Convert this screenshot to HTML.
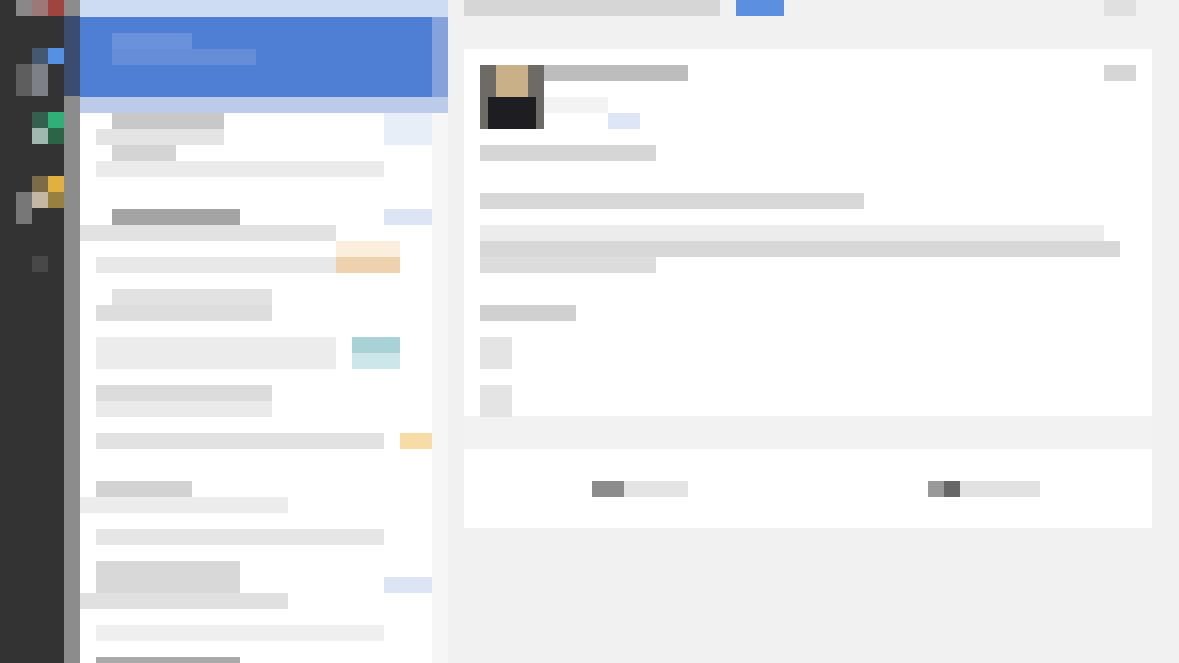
<!DOCTYPE html><html><head><meta charset="utf-8"><style>
body{margin:0;width:1179px;height:663px;overflow:hidden;background:#f1f1f1;position:relative;font-family:"Liberation Sans",sans-serif}
div{position:absolute}
.b{background:#ddd}
</style></head><body>
<div style="left:0;top:0;width:64px;height:663px;background:#333"></div>
<div style="left:64px;top:0;width:16px;height:663px;background:#8c8c8c"></div>
<div style="left:16px;top:0;width:16px;height:16px;background:#888"></div>
<div style="left:32px;top:0;width:16px;height:16px;background:#9c7878"></div>
<div style="left:48px;top:0;width:16px;height:16px;background:#a04440"></div>
<div style="left:48px;top:48px;width:16px;height:16px;background:#5590e5"></div>
<div style="left:32px;top:48px;width:16px;height:16px;background:#445870"></div>
<div style="left:16px;top:64px;width:16px;height:32px;background:#5e5e5e"></div>
<div style="left:32px;top:64px;width:16px;height:32px;background:#7e8088"></div>
<div style="left:64px;top:16px;width:16px;height:80px;background:#3c4c70"></div>
<div style="left:48px;top:112px;width:16px;height:16px;background:#30b078"></div>
<div style="left:32px;top:112px;width:16px;height:16px;background:#356050"></div>
<div style="left:32px;top:128px;width:16px;height:16px;background:#a0b8b0"></div>
<div style="left:48px;top:128px;width:16px;height:16px;background:#2c6448"></div>
<div style="left:48px;top:176px;width:16px;height:16px;background:#e0b040"></div>
<div style="left:32px;top:176px;width:16px;height:16px;background:#7c6a48"></div>
<div style="left:32px;top:192px;width:16px;height:16px;background:#c4b8a4"></div>
<div style="left:48px;top:192px;width:16px;height:16px;background:#988040"></div>
<div style="left:16px;top:192px;width:16px;height:32px;background:#777"></div>
<div style="left:32px;top:256px;width:16px;height:16px;background:#484848"></div>
<div style="left:80px;top:0;width:368px;height:663px;background:#fff"></div>
<div style="left:432px;top:0;width:16px;height:663px;background:#f6f6f6"></div>
<div style="left:80px;top:0;width:368px;height:17px;background:#cddbf3"></div>
<div style="left:80px;top:17px;width:352px;height:80px;background:#4f7fd4"></div>
<div style="left:432px;top:17px;width:16px;height:80px;background:#86a2dc"></div>
<div style="left:112px;top:33px;width:80px;height:16px;background:#6a92dc"></div>
<div style="left:112px;top:49px;width:144px;height:16px;background:#668ed8"></div>
<div style="left:80px;top:97px;width:368px;height:16px;background:#bdcbea"></div>
<!-- list rows -->
<div class="b" style="left:112px;top:113px;width:112px;height:16px;background:#c8c8c8"></div>
<div class="b" style="left:96px;top:129px;width:128px;height:16px;background:#e4e4e4"></div>
<div class="b" style="left:112px;top:145px;width:64px;height:16px;background:#d4d4d4"></div>
<div class="b" style="left:96px;top:161px;width:288px;height:16px;background:#ebebeb"></div>
<div style="left:384px;top:113px;width:48px;height:32px;background:#e8eef8"></div>
<div style="left:112px;top:209px;width:128px;height:16px;background:#a4a4a4"></div>
<div style="left:384px;top:209px;width:48px;height:16px;background:#dde5f5"></div>
<div class="b" style="left:80px;top:225px;width:256px;height:16px;background:#e2e2e2"></div>
<div class="b" style="left:96px;top:257px;width:240px;height:16px;background:#e8e8e8"></div>
<div style="left:336px;top:241px;width:64px;height:16px;background:#fbeedd"></div>
<div style="left:336px;top:257px;width:64px;height:16px;background:#eed2b0"></div>
<div class="b" style="left:112px;top:289px;width:160px;height:16px;background:#e2e2e2"></div>
<div class="b" style="left:96px;top:305px;width:176px;height:16px;background:#ddd"></div>
<div class="b" style="left:96px;top:337px;width:240px;height:32px;background:#ececec"></div>
<div style="left:352px;top:337px;width:48px;height:16px;background:#a8d2d6"></div>
<div style="left:352px;top:353px;width:48px;height:16px;background:#cde6ea"></div>
<div class="b" style="left:96px;top:385px;width:176px;height:16px;background:#dcdcdc"></div>
<div class="b" style="left:96px;top:401px;width:176px;height:16px;background:#eaeaea"></div>
<div class="b" style="left:96px;top:433px;width:288px;height:16px;background:#e2e2e2"></div>
<div style="left:400px;top:433px;width:32px;height:16px;background:#f8dca8"></div>
<div class="b" style="left:96px;top:481px;width:96px;height:16px;background:#d2d2d2"></div>
<div class="b" style="left:80px;top:497px;width:208px;height:16px;background:#ececec"></div>
<div class="b" style="left:96px;top:529px;width:288px;height:16px;background:#e6e6e6"></div>
<div class="b" style="left:96px;top:561px;width:144px;height:32px;background:#d8d8d8"></div>
<div style="left:384px;top:577px;width:48px;height:16px;background:#dde5f5"></div>
<div class="b" style="left:80px;top:593px;width:208px;height:16px;background:#e0e0e0"></div>
<div class="b" style="left:96px;top:625px;width:288px;height:16px;background:#efefef"></div>
<div class="b" style="left:96px;top:657px;width:144px;height:6px;background:#aaa"></div>
<!-- right -->
<div style="left:464px;top:0;width:256px;height:16px;background:#d6d6d6"></div>
<div style="left:736px;top:0;width:48px;height:16px;background:#5c8fe0"></div>
<div style="left:1104px;top:0;width:32px;height:16px;background:#e0e0e0"></div>
<div style="left:464px;top:49px;width:688px;height:479px;background:#fff"></div>
<div style="left:464px;top:416px;width:688px;height:33px;background:#f2f2f2"></div>
<div style="left:480px;top:65px;width:64px;height:64px;background:#6e6a66"></div>
<div style="left:496px;top:65px;width:32px;height:32px;background:#c9b088"></div>
<div style="left:488px;top:97px;width:48px;height:32px;background:#1e1e22"></div>
<div style="left:544px;top:65px;width:144px;height:16px;background:#bdbdbd"></div>
<div style="left:544px;top:97px;width:64px;height:16px;background:#f3f3f3"></div>
<div style="left:608px;top:113px;width:32px;height:16px;background:#dde5f7"></div>
<div style="left:1104px;top:65px;width:32px;height:16px;background:#d6d6d6"></div>
<div style="left:480px;top:145px;width:176px;height:16px;background:#d6d6d6"></div>
<div style="left:480px;top:193px;width:384px;height:16px;background:#d8d8d8"></div>
<div style="left:480px;top:225px;width:624px;height:16px;background:#ececec"></div>
<div style="left:480px;top:241px;width:640px;height:16px;background:#d8d8d8"></div>
<div style="left:480px;top:257px;width:176px;height:16px;background:#dcdcdc"></div>
<div style="left:480px;top:305px;width:96px;height:16px;background:#d0d0d0"></div>
<div style="left:480px;top:337px;width:32px;height:32px;background:#e4e4e4"></div>
<div style="left:480px;top:385px;width:32px;height:32px;background:#e4e4e4"></div>
<div style="left:592px;top:481px;width:32px;height:16px;background:#8c8c8c"></div>
<div style="left:624px;top:481px;width:64px;height:16px;background:#e4e4e4"></div>
<div style="left:928px;top:481px;width:16px;height:16px;background:#999"></div>
<div style="left:944px;top:481px;width:16px;height:16px;background:#666"></div>
<div style="left:960px;top:481px;width:80px;height:16px;background:#e2e2e2"></div>
</body></html>
